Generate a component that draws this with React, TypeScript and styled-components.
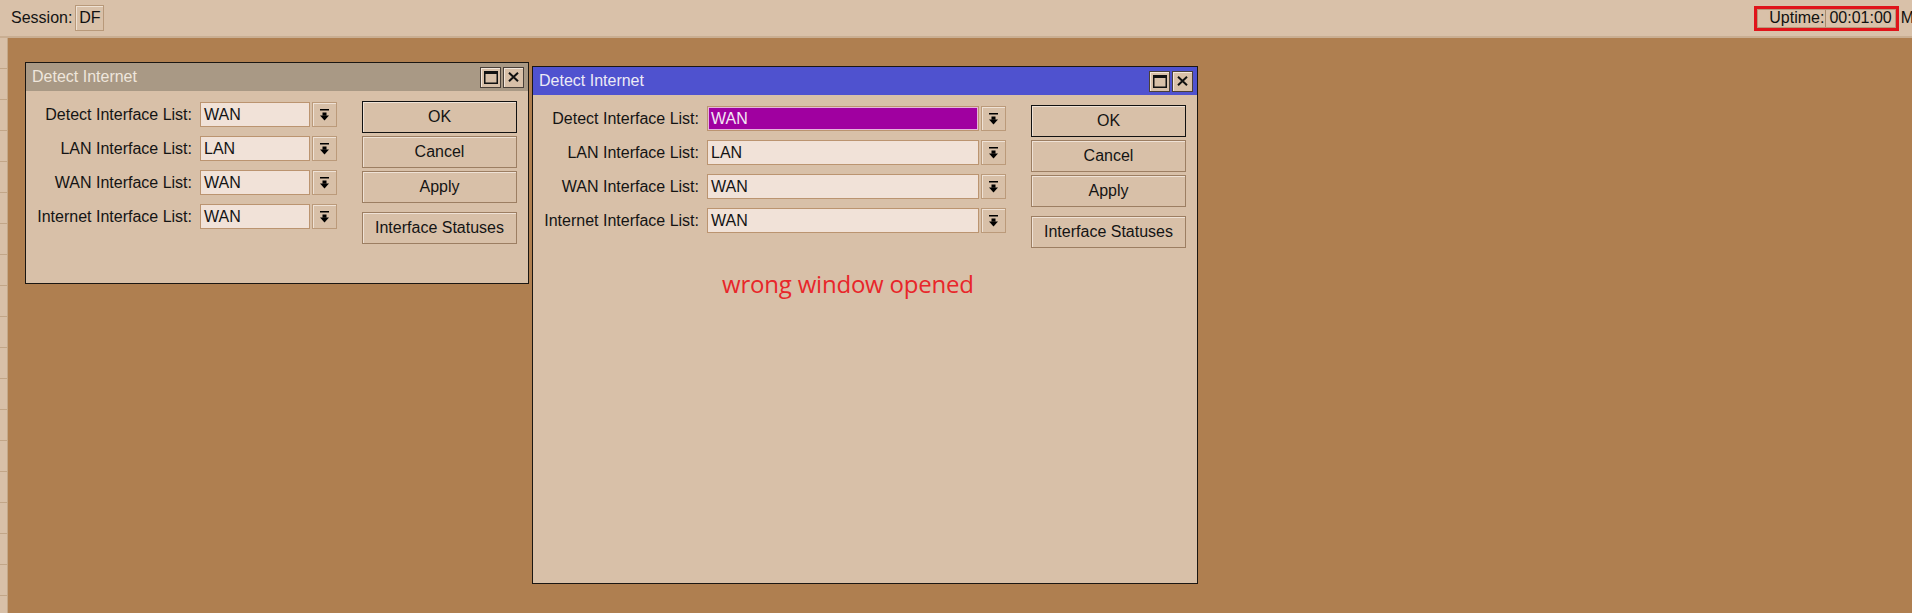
import React from "react";
import styled, { createGlobalStyle } from "styled-components";

const GlobalStyle = createGlobalStyle`
  html, body {
    margin: 0;
    padding: 0;
    background: #af7f50;
    overflow: hidden;
  }
  body {
    font-family: "Liberation Sans", Arial, sans-serif;
    font-size: 16px;
    color: #101010;
  }
  * { box-sizing: border-box; }
`;

const Screen = styled.div`
  width: 1912px;
  height: 613px;
  display: flex;
  flex-direction: column;
  overflow: hidden;
`;

const TopBar = styled.div`
  height: 38px;
  flex-shrink: 0;
  display: flex;
  align-items: center;
  padding: 0 0 0 11px;
  background: #d9c1a9;
  border-bottom: 2px solid #c9ae92;
  overflow: hidden;
  white-space: nowrap;
`;

const BarText = styled.span`
  font-size: 16px;
  color: #141414;
`;

const SessionBox = styled.div`
  margin-left: 3px;
  width: 29px;
  height: 26px;
  display: flex;
  align-items: center;
  justify-content: center;
  border: 1px solid #b8997a;
  box-shadow: inset 1px 1px 0 #efe2d4;
  font-size: 16px;
`;

const Spacer = styled.div`
  flex: 1;
`;

const RedMark = styled.div`
  width: 145px;
  height: 25px;
  border: 3px solid #e0141a;
  display: flex;
  flex-shrink: 0;
`;

const UptimeField = styled.div`
  flex: 1;
  display: flex;
  align-items: center;
  border: 1px solid #b8997a;
`;

const UptimeLabel = styled.span`
  flex: 1;
  text-align: right;
  padding-right: 1px;
`;

const UptimeValue = styled.span`
  height: 100%;
  display: flex;
  align-items: center;
  padding: 0 3px 0 3px;
  border-left: 1px solid #a88a6c;
`;

const CutText = styled.span`
  margin-left: 2px;
  margin-right: -2px;
  font-size: 16px;
`;

const Main = styled.div`
  flex: 1;
  display: flex;
  min-height: 0;
`;

const Sidebar = styled.div`
  width: 8px;
  flex-shrink: 0;
  background: #d8c0a8;
  border-right: 1px solid #c4a888;
  display: flex;
  flex-direction: column;
`;

const SideItem = styled.div`
  height: 31px;
  flex-shrink: 0;
  border-bottom: 1px solid #c2a688;
`;

const Desktop = styled.div`
  flex: 1;
  position: relative;
  background: #af7f50;
`;

const Window = styled.div<{ $x: number; $y: number; $w: number; $h: number }>`
  position: absolute;
  left: ${(p) => p.$x}px;
  top: ${(p) => p.$y}px;
  width: ${(p) => p.$w}px;
  height: ${(p) => p.$h}px;
  background: #d8c0a8;
  border: 1px solid #1a1612;
  display: flex;
  flex-direction: column;
`;

const TitleBar = styled.div<{ $active?: boolean }>`
  height: 28px;
  flex-shrink: 0;
  display: flex;
  align-items: center;
  padding: 0 4px 0 6px;
  background: ${(p) => (p.$active ? "#4f52cf" : "#a99985")};
  color: ${(p) => (p.$active ? "#eceaf6" : "#efe6dc")};
`;

const TitleText = styled.span`
  flex: 1;
  font-size: 16px;
`;

const TitleButtons = styled.div`
  display: flex;
  gap: 2px;
`;

const TitleButton = styled.div`
  width: 21px;
  height: 21px;
  display: flex;
  align-items: center;
  justify-content: center;
  background: #d8c0a8;
  border: 1px solid #4a4038;
  box-shadow: inset 1px 1px 0 #f2e6da;
`;

const Body = styled.div`
  flex: 1;
  display: flex;
  flex-direction: column;
  padding: 10px 11px 0 10px;
`;

const FormArea = styled.div`
  display: flex;
  gap: 25px;
`;

const Fields = styled.div`
  flex: 1;
  display: flex;
  flex-direction: column;
  gap: 9px;
  padding-top: 1px;
`;

const Row = styled.div`
  height: 25px;
  display: flex;
  align-items: center;
`;

const Label = styled.span`
  width: 156px;
  margin-right: 8px;
  text-align: right;
  white-space: nowrap;
  font-size: 16px;
  color: #141414;
`;

const Field = styled.div<{ $selected?: boolean }>`
  flex: 1;
  height: 25px;
  display: flex;
  align-items: center;
  padding-left: 3px;
  font-size: 16px;
  background: ${(p) => (p.$selected ? "#a000a0" : "#f1e2d8")};
  color: ${(p) => (p.$selected ? "#f4e8f4" : "#141414")};
  border: 1px solid #bb9470;
  box-shadow: ${(p) => (p.$selected ? "inset 0 0 0 1px #e6b4dc" : "none")};
`;

const DropButton = styled.div`
  width: 25px;
  height: 25px;
  margin-left: 2px;
  display: flex;
  align-items: center;
  justify-content: center;
  background: #d8c0a8;
  border: 1px solid #bb9a7a;
  box-shadow: inset 1px 1px 0 #efe2d6;
`;

const Buttons = styled.div`
  width: 155px;
  display: flex;
  flex-direction: column;
  gap: 3px;
`;

const Button = styled.div<{ $default?: boolean; $spaced?: boolean }>`
  height: 32px;
  display: flex;
  align-items: center;
  justify-content: center;
  font-size: 16px;
  color: #141414;
  background: #d8c0a8;
  border: 1px solid ${(p) => (p.$default ? "#111" : "#9c7e62")};
  box-shadow: inset 1px 1px 0 #efe2d6;
  margin-top: ${(p) => (p.$spaced ? "6px" : "0")};
`;

const Annotation = styled.div`
  margin: 20px 0 0 179px;
  font-family: "Open Sans", "Noto Sans", sans-serif;
  font-size: 24px;
  line-height: 32px;
  letter-spacing: -0.2px;
  color: #e8262a;
`;

const DropIcon = () => (
  <svg width="9" height="12" viewBox="0 0 9 12">
    <rect x="0" y="0" width="9" height="1.5" fill="#000" />
    <rect x="2.5" y="3.5" width="4" height="3.2" fill="#000" />
    <polygon points="0,6.5 9,6.5 4.5,11.5" fill="#000" />
  </svg>
);

const MaxIcon = () => (
  <svg width="14" height="13" viewBox="0 0 14 13">
    <rect x="0.75" y="0.75" width="12.5" height="11.5" fill="none" stroke="#111" strokeWidth="1.5" />
    <rect x="0" y="0" width="14" height="3" fill="#111" />
  </svg>
);

const CloseIcon = () => (
  <svg width="11" height="10" viewBox="0 0 11 10">
    <path d="M1 0.8 L10 9.2 M10 0.8 L1 9.2" stroke="#111" strokeWidth="2" />
  </svg>
);

const rows = [
  { label: "Detect Interface List:", value: "WAN" },
  { label: "LAN Interface List:", value: "LAN" },
  { label: "WAN Interface List:", value: "WAN" },
  { label: "Internet Interface List:", value: "WAN" },
];

type WinProps = {
  x: number;
  y: number;
  w: number;
  h: number;
  active?: boolean;
  note?: string;
};

const DetectWindow: React.FC<WinProps> = ({ x, y, w, h, active, note }) => (
  <Window $x={x} $y={y} $w={w} $h={h}>
    <TitleBar $active={active}>
      <TitleText>Detect Internet</TitleText>
      <TitleButtons>
        <TitleButton>
          <MaxIcon />
        </TitleButton>
        <TitleButton>
          <CloseIcon />
        </TitleButton>
      </TitleButtons>
    </TitleBar>
    <Body>
      <FormArea>
        <Fields>
          {rows.map((r, i) => (
            <Row key={r.label}>
              <Label>{r.label}</Label>
              <Field $selected={active && i === 0}>{r.value}</Field>
              <DropButton>
                <DropIcon />
              </DropButton>
            </Row>
          ))}
        </Fields>
        <Buttons>
          <Button $default>OK</Button>
          <Button>Cancel</Button>
          <Button>Apply</Button>
          <Button $spaced>Interface Statuses</Button>
        </Buttons>
      </FormArea>
      {note && <Annotation>{note}</Annotation>}
    </Body>
  </Window>
);

export default function App() {
  return (
    <>
      <GlobalStyle />
      <Screen>
        <TopBar>
          <BarText>Session:</BarText>
          <SessionBox>DF</SessionBox>
          <Spacer />
          <RedMark>
            <UptimeField>
              <UptimeLabel>Uptime:</UptimeLabel>
              <UptimeValue>00:01:00</UptimeValue>
            </UptimeField>
          </RedMark>
          <CutText>M</CutText>
        </TopBar>
        <Main>
          <Sidebar>
            {Array.from({ length: 19 }).map((_, i) => (
              <SideItem key={i} />
            ))}
          </Sidebar>
          <Desktop>
            <DetectWindow x={17} y={24} w={504} h={222} />
            <DetectWindow x={524} y={28} w={666} h={518} active note="wrong window opened" />
          </Desktop>
        </Main>
      </Screen>
    </>
  );
}
